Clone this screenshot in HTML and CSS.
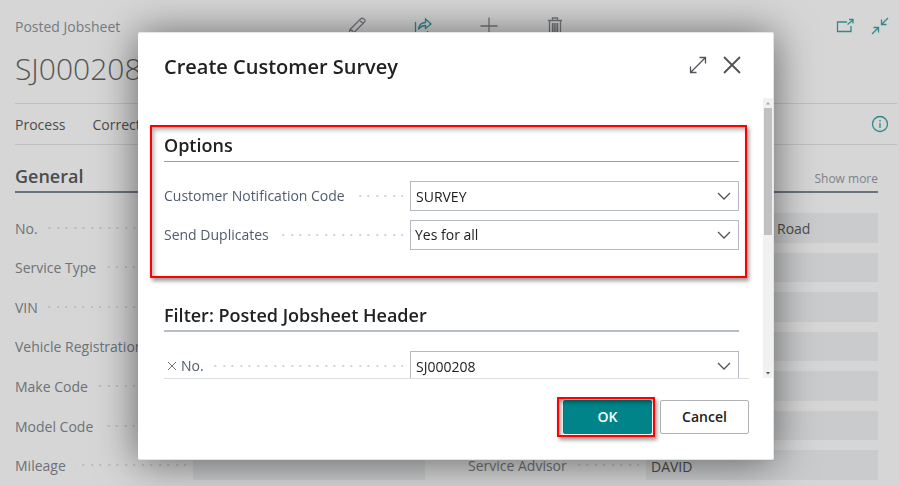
FILE: index.html
```html
<!DOCTYPE html>
<html lang="en">
<head>
<meta charset="utf-8">
<meta name="viewport" content="width=device-width, initial-scale=1">
<title>Posted Jobsheet</title>
<link rel="stylesheet" href="styles.css">
</head>
<body>
<main class="page">
  <header class="topbar">
    <span class="page-type">Posted Jobsheet</span>
    <div class="actions">
      <button class="icon-btn" type="button" aria-label="Edit"><svg viewBox="0 0 18 18"><path class="bold" d="M1 17l1-4.500L12.500 2Q14 .5 16 2t0 3.500L5.500 16zM2 12.500q2.500.500 3.500 3.500M11.500 3l3.500 3.500"/></svg></button>
      <button class="icon-btn teal" type="button" aria-label="Share"><svg viewBox="0 0 18 18"><path class="bold" d="M1.500 5v11.500h12V14M4.500 12.500C5 8 7.500 5.500 11.500 5.500V2L17 7l-5.500 4.500V8.500C8.500 8.500 6.500 9.500 4.500 12.500z"/></svg></button>
      <button class="icon-btn" type="button" aria-label="New"><svg viewBox="0 0 18 18"><path class="bold" d="M9 .5v17M.5 9h17"/></svg></button>
      <button class="icon-btn" type="button" aria-label="Delete"><svg viewBox="0 0 18 18"><path class="bold" d="M2 3.500h14M3.500 3.500v14h11v-14M6.500 3V1h5v2M6.500 6v9M8.200 6v9M9.900 6v9M11.600 6v9"/></svg></button>
    </div>
    <div class="window-actions">
      <button class="icon-btn teal" type="button" aria-label="Open in new window"><svg viewBox="0 0 18 18"><path class="bold" d="M11 5H1.500v9.500h13.500V9M11.500 7.500L17 3M13 2.500h4v4"/></svg></button>
      <button class="icon-btn teal" type="button" aria-label="Collapse"><svg viewBox="0 0 18 18"><path class="bold" d="M17 1l-6.500 6.500M10.500 2.500v5h5M1 17l6.500-6.500M2.500 10.500h5v5"/></svg></button>
    </div>
  </header>
  <h1 class="record">SJ000208</h1>
  <nav class="menu">
    <a href="#process">Process</a>
    <a href="#correct">Correct</a>
    <button class="icon-btn teal info" type="button" aria-label="Details"><svg viewBox="0 0 18 18"><circle class="bold" cx="9" cy="9" r="7.500"/><path class="bold" d="M9 8v5M9 5v1.500"/></svg></button>
  </nav>
  <section class="general">
    <div class="section-head"><h2>General</h2><a href="#more">Show more</a></div>
    <div class="columns">
      <div class="fields">
        <div class="row"><label for="no">No.</label><i></i><input id="no" readonly></div>
        <div class="row"><label for="type">Service Type</label><i></i><input id="type" readonly></div>
        <div class="row"><label for="vin">VIN</label><i></i><input id="vin" readonly></div>
        <div class="row"><label for="reg">Vehicle Registration</label><i></i><input id="reg" readonly></div>
        <div class="row"><label for="make">Make Code</label><i></i><input id="make" readonly></div>
        <div class="row"><label for="model">Model Code</label><i></i><input id="model" readonly></div>
        <div class="row"><label for="mileage">Mileage</label><i></i><input id="mileage" readonly></div>
      </div>
      <div class="fields">
        <div class="row"><label for="addr">Address</label><i></i><input class="address" id="addr" value="Road" readonly></div>
        <div class="row"><label for="addr2">Address 2</label><i></i><input id="addr2" readonly></div>
        <div class="row"><label for="city">City</label><i></i><input id="city" readonly></div>
        <div class="row"><label for="county">County</label><i></i><input id="county" readonly></div>
        <div class="row"><label for="post">Post Code</label><i></i><input id="post" readonly></div>
        <div class="row"><label for="phone">Phone</label><i></i><input id="phone" readonly></div>
        <div class="row"><label for="advisor">Service Advisor</label><i></i><input id="advisor" value="DAVID" readonly></div>
      </div>
    </div>
  </section>
</main>

<div class="overlay">
  <form class="dialog" role="dialog" aria-labelledby="dialog-title">
    <header class="dialog-head">
      <h2 id="dialog-title">Create Customer Survey</h2>
      <button class="icon-btn dark" type="button" aria-label="Expand"><svg viewBox="0 0 18 18"><path class="bold" d="M2 16L16 2M10.500 1.500h6v6M1.500 10.500v6h6"/></svg></button>
      <button class="icon-btn dark" type="button" aria-label="Close"><svg viewBox="0 0 18 18"><path class="heavy" d="M1 1l16 16M17 1L1 17"/></svg></button>
    </header>
    <div class="dialog-body">
      <div class="scroll">
        <section class="group options">
          <h3>Options</h3>
          <div class="row"><label for="code">Customer Notification Code</label><i></i>
            <div class="control"><input id="code" value="SURVEY"><button class="drop" type="button" aria-label="Choose code"><svg viewBox="0 0 14 8"><path class="bold" d="M1 1l6 6 6-6"/></svg></button></div></div>
          <div class="row"><label for="dup">Send Duplicates</label><i></i>
            <div class="control"><select id="dup"><option>Yes for all</option></select><span class="drop"><svg viewBox="0 0 14 8"><path class="bold" d="M1 1l6 6 6-6"/></svg></span></div></div>
        </section>
        <section class="group filter">
          <h3>Filter: Posted Jobsheet Header</h3>
          <div class="row"><button class="remove" type="button" aria-label="Remove filter"><svg viewBox="0 0 10 10"><path d="M1 1l8 8M9 1L1 9"/></svg></button><label for="fno">No.</label><i></i>
            <div class="control"><input id="fno" value="SJ000208"><button class="drop" type="button" aria-label="Choose number"><svg viewBox="0 0 14 8"><path class="bold" d="M1 1l6 6 6-6"/></svg></button></div></div>
        </section>
      </div>
      <div class="scrollbar" aria-hidden="true">
        <svg viewBox="0 0 10 10"><path class="up" d="M3 6.500h4L5 4z"/></svg>
        <div class="track"><div class="thumb"></div></div>
        <svg viewBox="0 0 10 10"><path class="down" d="M3 4h4L5 6.500z"/></svg>
      </div>
    </div>
    <footer class="dialog-foot">
      <span class="marked"><button class="btn primary" type="submit">OK</button></span>
      <button class="btn" type="button">Cancel</button>
    </footer>
  </form>
</div>
</body>
</html>
```
FILE: styles.css
```css
* { box-sizing: border-box; }

body {
  margin: 0;
  background: #d6d6d6;
  color: #4c4c4c;
  font: 14px/20px "Open Sans", "Noto Sans", sans-serif;
}

h1, h2, h3 { margin: 0; font-weight: 600; }
a { color: inherit; text-decoration: none; }
button, input, select { font: inherit; color: inherit; }

svg { display: block; width: 100%; height: 100%; fill: none; stroke: currentColor; stroke-width: 1; }
.bold { stroke-width: 1.3; }
.heavy { stroke-width: 1.8; }

.icon-btn { width: 18px; height: 18px; padding: 0; border: 0; background: none; color: #74777c; }
.icon-btn.teal { color: #2f8a8e; }
.icon-btn.dark { color: #505357; }

.page { display: flex; flex-direction: column; min-height: 100vh; padding: 15px 2px 6px 15px; }

.topbar { display: grid; grid-template-columns: 1fr auto 1fr; align-items: center; height: 20px; }
.page-type { padding-top: 2px; color: #747b85; }
.actions { display: flex; gap: 48px; }
.window-actions { display: flex; justify-content: flex-end; gap: 17px; padding-right: 8px; }

.record { height: 68px; font-size: 30px; line-height: 68px; font-weight: 300; color: #555; }

.menu {
  display: flex;
  align-items: center;
  gap: 27px;
  height: 42px;
  padding-right: 8px;
  border: solid #bfc0c2;
  border-width: 1px 0;
}
.menu a { padding-top: 2px; }
.info { margin-left: auto; }

.general { display: flex; flex: 1; flex-direction: column; padding-right: 19px; }
.section-head {
  display: flex;
  align-items: center;
  justify-content: space-between;
  height: 48px;
  margin-bottom: 20px;
  padding-top: 16px;
  border-bottom: 2px solid #6b727e;
}
.section-head h2 { font-size: 18px; }
.section-head a { padding-top: 6px; font-size: 12px; color: #7d828a; }

.columns { display: grid; flex: 1; grid-template-columns: 1fr 1fr; gap: 43px; }
.fields { display: grid; grid-auto-rows: 1fr; gap: 10px; }
.row { display: flex; align-items: center; white-space: nowrap; }
.fields label { padding-top: 2px; color: #6c7278; }
.fields input {
  flex: 0 0 232px;
  width: 232px;
  height: 100%;
  min-height: 0;
  padding: 2px 5px 0;
  border: 0;
  background: #c9cbcc;
}
.fields .address { padding-left: 131px; }

.row i {
  flex: 1;
  height: 2px;
  margin: 0 7px 0 10px;
  background:
    linear-gradient(to left, #b9bbbd 2px, transparent 2px) right 0 top 0 / 17px 2px,
    linear-gradient(to left, #b9bbbd 2px, transparent 2px) right 8px top 0 / 17px 2px;
}
.group .row i {
  background:
    linear-gradient(to left, #d0d3d6 2px, transparent 2px) right 0 top 0 / 17px 2px,
    linear-gradient(to left, #d0d3d6 2px, transparent 2px) right 8px top 0 / 17px 2px;
}

.overlay { position: fixed; inset: 0; display: flex; padding: 32px 125px 26px 138px; }
.dialog {
  display: flex;
  flex: 1;
  flex-direction: column;
  min-width: 0;
  border: 1px solid #e4e4e4;
  border-left-width: 0;
  border-radius: 2px;
  background: #fff;
  box-shadow: 0 2px 42px rgba(0, 0, 0, .55);
  color: #212121;
}
.dialog-head { display: flex; align-items: center; gap: 16px; height: 65px; padding: 0 32px 2px 26px; }
.dialog-head h2 { flex: 1; font-size: 20px; padding-top: 4px; }

.dialog-body { display: flex; flex: 1; min-height: 0; }
.scroll { flex: 1; min-width: 0; padding: 36px 24px 0 26px; overflow: hidden; }

.group { position: relative; display: grid; gap: 9px; }
.group h3 { height: 28px; margin-bottom: 10px; border-bottom: 1px solid #9a9ea6; font-size: 18px; line-height: 22px; }
.options::before {
  content: "";
  position: absolute;
  inset: -9px -8px -28px -14px;
  border: 2px solid #f00;
  box-shadow: 2px 3px 4px rgba(0, 0, 0, .4), inset 2px 3px 4px rgba(0, 0, 0, .3);
  pointer-events: none;
}
.filter { margin-top: 54px; }
.filter h3 { border-bottom: 2px solid #b8bec6; }

.group .row { height: 30px; }
.group label { color: #505c6d; }
.control { position: relative; flex: 0 0 329px; height: 100%; }
.control input, .control select {
  width: 100%;
  height: 100%;
  padding: 0 30px 0 5px;
  border: 1px solid #b5bac2;
  border-radius: 0;
  background: #fff;
  appearance: none;
}
.control select { padding-left: 4px; }
.drop {
  position: absolute;
  top: 11px;
  right: 8px;
  width: 14px;
  height: 8px;
  padding: 0;
  border: 0;
  background: none;
  color: #505357;
  pointer-events: none;
}
.remove { width: 10px; height: 10px; margin: 0 4px 0 3px; padding: 0; border: 0; background: none; color: #6c7278; }

.scrollbar { display: flex; flex-direction: column; width: 10px; background: #f1f1f1; }
.scrollbar svg { flex: 0 0 10px; stroke: none; }
.up { fill: #a3a3a3; }
.down { fill: #505050; }
.track { flex: 1; padding: 0 1px; }
.thumb { height: 49%; background: #c1c1c1; }

.dialog-foot {
  display: flex;
  justify-content: flex-end;
  gap: 8px;
  height: 81px;
  margin: 0 24px 0 26px;
  padding-top: 21px;
  border-top: 1px solid #dcdddf;
}
.btn {
  width: 89px;
  height: 34px;
  padding: 0;
  border: 1px solid #b0b2b5;
  border-radius: 2px;
  background: #fff;
  font-weight: 600;
}
.primary { border-color: #00848a; background: #00848a; color: #fff; }
.marked { position: relative; height: 34px; }
.marked::after {
  content: "";
  position: absolute;
  inset: -3px -3px -3px -6px;
  border: 2px solid #f00;
  box-shadow: 2px 3px 4px rgba(0, 0, 0, .4), inset 2px 3px 4px rgba(0, 0, 0, .4);
  pointer-events: none;
}
```
